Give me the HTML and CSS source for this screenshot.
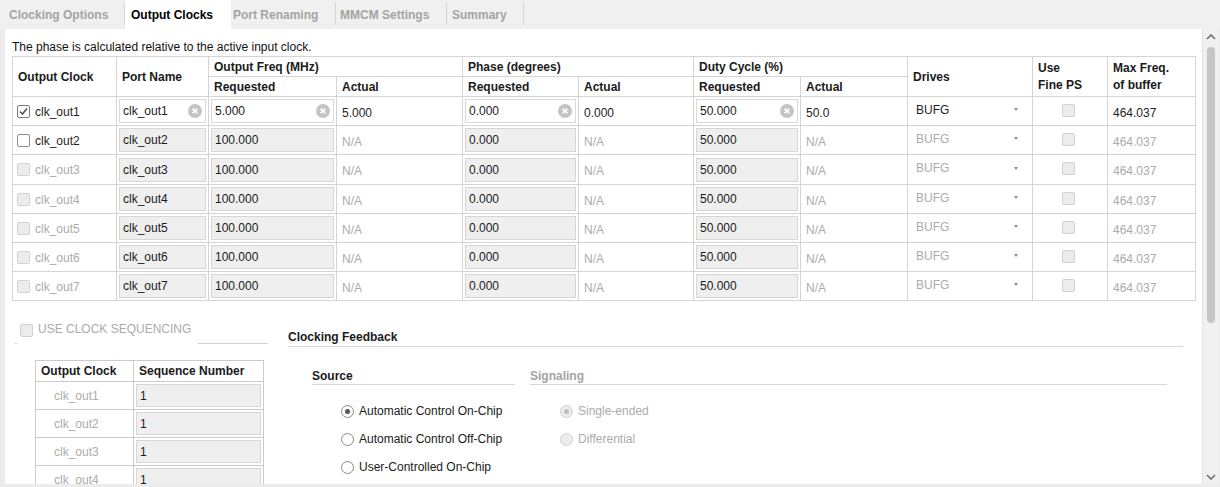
FILE: index.html
```html
<!DOCTYPE html>
<html>
<head>
<meta charset="utf-8">
<link rel="stylesheet" href="styles.css">
</head>
<body>
<div class="tabs">
  <div class="tab t1">Clocking Options</div><span class="sep"></span>
  <div class="tab t2 active">Output Clocks</div>
  <div class="tab t3">Port Renaming</div><span class="sep"></span>
  <div class="tab t4">MMCM Settings</div><span class="sep"></span>
  <div class="tab t5">Summary</div><span class="sep"></span>
</div>
<div class="panel">
  <div class="content">
    <div class="desc">The phase is calculated relative to the active input clock.</div>
    <table class="grid">
      <colgroup>
        <col class="w104"><col class="w92"><col class="w128"><col class="w126"><col class="w116"><col class="w115"><col class="w107"><col class="w107"><col class="w125"><col class="w75"><col class="w88">
      </colgroup>
      <thead>
        <tr class="h1">
          <th rowspan="2">Output Clock</th>
          <th rowspan="2">Port Name</th>
          <th colspan="2">Output Freq (MHz)</th>
          <th colspan="2">Phase (degrees)</th>
          <th colspan="2">Duty Cycle (%)</th>
          <th rowspan="2">Drives</th>
          <th rowspan="2" class="two">Use<br>Fine PS</th>
          <th rowspan="2" class="two">Max Freq.<br>of buffer</th>
        </tr>
        <tr class="h2">
          <th>Requested</th><th>Actual</th>
          <th>Requested</th><th>Actual</th>
          <th>Requested</th><th>Actual</th>
        </tr>
      </thead>
      <tbody>
        <tr>
          <td class="oc"><span class="cb on"><svg width="11" height="11" viewBox="0 0 11 11"><polyline points="2,5.5 4.5,8 9,2.5" fill="none" stroke="#555" stroke-width="1.6"/></svg></span><span>clk_out1</span></td>
          <td class="in"><div class="field white"><span>clk_out1</span><span class="clr"><svg width="14" height="14" viewBox="0 0 14 14"><circle cx="7" cy="7" r="7" fill="#c4c4c4"/><path d="M4.6 4.6 L9.4 9.4 M9.4 4.6 L4.6 9.4" stroke="#fff" stroke-width="1.7"/></svg></span></div></td>
          <td class="in"><div class="field white"><span>5.000</span><span class="clr"><svg width="14" height="14" viewBox="0 0 14 14"><circle cx="7" cy="7" r="7" fill="#c4c4c4"/><path d="M4.6 4.6 L9.4 9.4 M9.4 4.6 L4.6 9.4" stroke="#fff" stroke-width="1.7"/></svg></span></div></td>
          <td class="act">5.000</td>
          <td class="in"><div class="field white"><span>0.000</span><span class="clr"><svg width="14" height="14" viewBox="0 0 14 14"><circle cx="7" cy="7" r="7" fill="#c4c4c4"/><path d="M4.6 4.6 L9.4 9.4 M9.4 4.6 L4.6 9.4" stroke="#fff" stroke-width="1.7"/></svg></span></div></td>
          <td class="act">0.000</td>
          <td class="in"><div class="field white"><span>50.000</span><span class="clr"><svg width="14" height="14" viewBox="0 0 14 14"><circle cx="7" cy="7" r="7" fill="#c4c4c4"/><path d="M4.6 4.6 L9.4 9.4 M9.4 4.6 L4.6 9.4" stroke="#fff" stroke-width="1.7"/></svg></span></div></td>
          <td class="act">50.0</td>
          <td class="drv"><div class="drv-in"><span>BUFG</span><span class="caret"></span></div></td>
          <td class="fps"><span class="cb dis"></span></td>
          <td class="act">464.037</td>
        </tr>
        <tr>
          <td class="oc"><span class="cb"></span><span>clk_out2</span></td>
          <td class="in"><div class="field">clk_out2</div></td>
          <td class="in"><div class="field">100.000</div></td>
          <td class="act na">N/A</td>
          <td class="in"><div class="field">0.000</div></td>
          <td class="act na">N/A</td>
          <td class="in"><div class="field">50.000</div></td>
          <td class="act na">N/A</td>
          <td class="drv na"><div class="drv-in"><span>BUFG</span><span class="caret"></span></div></td>
          <td class="fps"><span class="cb dis"></span></td>
          <td class="act na">464.037</td>
        </tr>
        <tr class="tall">
          <td class="oc na"><span class="cb dis"></span><span>clk_out3</span></td>
          <td class="in"><div class="field">clk_out3</div></td>
          <td class="in"><div class="field">100.000</div></td>
          <td class="act na">N/A</td>
          <td class="in"><div class="field">0.000</div></td>
          <td class="act na">N/A</td>
          <td class="in"><div class="field">50.000</div></td>
          <td class="act na">N/A</td>
          <td class="drv na"><div class="drv-in"><span>BUFG</span><span class="caret"></span></div></td>
          <td class="fps"><span class="cb dis"></span></td>
          <td class="act na">464.037</td>
        </tr>
        <tr>
          <td class="oc na"><span class="cb dis"></span><span>clk_out4</span></td>
          <td class="in"><div class="field">clk_out4</div></td>
          <td class="in"><div class="field">100.000</div></td>
          <td class="act na">N/A</td>
          <td class="in"><div class="field">0.000</div></td>
          <td class="act na">N/A</td>
          <td class="in"><div class="field">50.000</div></td>
          <td class="act na">N/A</td>
          <td class="drv na"><div class="drv-in"><span>BUFG</span><span class="caret"></span></div></td>
          <td class="fps"><span class="cb dis"></span></td>
          <td class="act na">464.037</td>
        </tr>
        <tr>
          <td class="oc na"><span class="cb dis"></span><span>clk_out5</span></td>
          <td class="in"><div class="field">clk_out5</div></td>
          <td class="in"><div class="field">100.000</div></td>
          <td class="act na">N/A</td>
          <td class="in"><div class="field">0.000</div></td>
          <td class="act na">N/A</td>
          <td class="in"><div class="field">50.000</div></td>
          <td class="act na">N/A</td>
          <td class="drv na"><div class="drv-in"><span>BUFG</span><span class="caret"></span></div></td>
          <td class="fps"><span class="cb dis"></span></td>
          <td class="act na">464.037</td>
        </tr>
        <tr>
          <td class="oc na"><span class="cb dis"></span><span>clk_out6</span></td>
          <td class="in"><div class="field">clk_out6</div></td>
          <td class="in"><div class="field">100.000</div></td>
          <td class="act na">N/A</td>
          <td class="in"><div class="field">0.000</div></td>
          <td class="act na">N/A</td>
          <td class="in"><div class="field">50.000</div></td>
          <td class="act na">N/A</td>
          <td class="drv na"><div class="drv-in"><span>BUFG</span><span class="caret"></span></div></td>
          <td class="fps"><span class="cb dis"></span></td>
          <td class="act na">464.037</td>
        </tr>
        <tr>
          <td class="oc na"><span class="cb dis"></span><span>clk_out7</span></td>
          <td class="in"><div class="field">clk_out7</div></td>
          <td class="in"><div class="field">100.000</div></td>
          <td class="act na">N/A</td>
          <td class="in"><div class="field">0.000</div></td>
          <td class="act na">N/A</td>
          <td class="in"><div class="field">50.000</div></td>
          <td class="act na">N/A</td>
          <td class="drv na"><div class="drv-in"><span>BUFG</span><span class="caret"></span></div></td>
          <td class="fps"><span class="cb dis"></span></td>
          <td class="act na">464.037</td>
        </tr>
      </tbody>
    </table>

    <div class="lower">
      <div class="seq">
        <div class="seq-head">
          <span class="tick"></span>
          <span class="cb dis"></span>
          <span class="seq-title">USE CLOCK SEQUENCING</span>
          <span class="seq-line"></span>
        </div>
        <table class="seqt">
          <colgroup><col class="w98"><col class="w130"></colgroup>
          <thead><tr><th>Output Clock</th><th>Sequence Number</th></tr></thead>
          <tbody>
            <tr><td class="sname">clk_out1</td><td class="in"><div class="field">1</div></td></tr>
            <tr><td class="sname">clk_out2</td><td class="in"><div class="field">1</div></td></tr>
            <tr><td class="sname">clk_out3</td><td class="in"><div class="field">1</div></td></tr>
            <tr><td class="sname">clk_out4</td><td class="in"><div class="field">1</div></td></tr>
            <tr><td class="sname">clk_out5</td><td class="in"><div class="field">1</div></td></tr>
          </tbody>
        </table>
      </div>
      <div class="fb">
        <div class="fb-title">Clocking Feedback</div>
        <div class="fb-body">
          <div class="grp src">
            <div class="grp-title">Source</div>
            <div class="radios">
              <div class="radio"><span class="rb sel"></span><span>Automatic Control On-Chip</span></div>
              <div class="radio"><span class="rb"></span><span>Automatic Control Off-Chip</span></div>
              <div class="radio"><span class="rb"></span><span>User-Controlled On-Chip</span></div>
            </div>
          </div>
          <div class="grp sig">
            <div class="grp-title dim">Signaling</div>
            <div class="radios">
              <div class="radio dim"><span class="rb sel dis"></span><span>Single-ended</span></div>
              <div class="radio dim"><span class="rb dis"></span><span>Differential</span></div>
            </div>
          </div>
        </div>
      </div>
    </div>
  </div>
  <div class="scrollbar">
    <svg class="chev-up" width="10" height="6" viewBox="0 0 10 6"><polyline points="1,5 5,1 9,5" fill="none" stroke="#6e6e6e" stroke-width="1.6"/></svg>
    <div class="thumb"></div>
    <svg class="chev-down" width="10" height="6" viewBox="0 0 10 6"><polyline points="1,1 5,5 9,1" fill="none" stroke="#6e6e6e" stroke-width="1.6"/></svg>
  </div>
</div>
</body>
</html>
```
FILE: styles.css
```css
* { box-sizing: border-box; }
html, body { margin: 0; padding: 0; }
body {
  width: 1220px;
  height: 487px;
  overflow: hidden;
  background: #ececec;
  font-family: "Liberation Sans", Arial, sans-serif;
  font-size: 12px;
  color: #1e1e1e;
}

/* tabs */
.tabs { display: flex; height: 29px; background: #f0f0f0; }
.tab {
  display: flex;
  align-items: center;
  font-weight: bold;
  color: #a4a4a4;
  padding-left: 5px;
  padding-top: 1px;
}
.tab.t1 { width: 124px; padding-left: 9px; }
.tab.t2 { width: 106px; padding-left: 6px; }
.tab.t3 { width: 104px; padding-left: 2px; }
.tab.t4 { width: 110px; padding-left: 4px; }
.tab.t5 { width: 76px; padding-left: 5px; }
.tab.active { background: #fff; color: #000; }
.sep { width: 1px; height: 22px; margin-top: 3px; background: #d4d4d4; }

/* panel */
.panel { display: flex; margin-left: 5px; width: 1214px; height: 455px; background: #fff; }
.content { flex: 1; background: #fff; padding: 11px 0 0 7px; overflow: hidden; }
.scrollbar {
  width: 17px;
  background: #f0f0f0;
  border-left: 1px solid #e4e4e4;
  display: flex;
  flex-direction: column;
  align-items: center;
  padding: 5px 0 4px;
}
.chev-up { display: block; }
.thumb { width: 8px; height: 276px; margin-top: 7px; border-radius: 4px; background: #c5c5c5; }
.chev-down { display: block; margin-top: auto; }

.desc { line-height: 14px; margin-bottom: 2px; color: #111; }

/* main grid */
.grid { border-collapse: collapse; table-layout: fixed; width: 1183px; }
.grid th, .grid td { border: 1px solid #d4d4d4; padding: 0; }
.w104 { width: 104px; } .w92 { width: 92px; } .w128 { width: 128px; } .w126 { width: 126px; }
.w116 { width: 116px; } .w115 { width: 115px; } .w107 { width: 107px; } .w125 { width: 125px; }
.w75 { width: 75px; } .w88 { width: 88px; } .w98 { width: 98px; } .w130 { width: 130px; }

.grid th { text-align: left; font-weight: bold; padding: 0 5px; color: #1a1a1a; vertical-align: middle; }
.grid tr.h1 { height: 20px; }
.grid tr.h2 { height: 20px; }
.grid th.two { line-height: 17px; vertical-align: top; padding-top: 3px; }
.grid tbody tr { height: 29px; }
.grid tbody tr.tall { height: 30px; }
.grid td { vertical-align: middle; }

.oc { padding-left: 4px !important; white-space: nowrap; }
.oc .cb { vertical-align: middle; margin-right: 5px; }
.oc span { vertical-align: middle; }

.in { padding: 2px !important; }
.field {
  display: flex;
  align-items: center;
  justify-content: space-between;
  height: 24px;
  border: 1px solid #d6d6d6;
  background: #efefef;
  padding: 0 3px 0 3px;
  color: #1a1a1a;
}
.field.white { background: #fff; border-color: #dadada; }
.clr { display: flex; }
.clr svg { display: block; }

.act { padding: 3px 5px 0 !important; }
.na { color: #ababab; }

.drv { padding: 0 14px 0 8px !important; }
.drv-in { display: flex; justify-content: space-between; align-items: center; padding-bottom: 3px; }
.drv.na .drv-in { color: #ababab; }
.caret {
  width: 0; height: 0;
  border-left: 2.5px solid transparent;
  border-right: 2.5px solid transparent;
  border-top: 3px solid #8a8a8a;
}

.fps { text-align: center; }
.fps .cb { vertical-align: middle; margin-bottom: 2px; margin-right: 4px; }

/* checkbox */
.cb {
  display: inline-block;
  width: 13px;
  height: 13px;
  border: 1px solid #8e8e8e;
  border-radius: 2px;
  background: #fff;
}
.cb svg { display: block; margin: 0; }
.cb.on { border-color: #7c7c7c; }
.cb.dis { border-color: #d2d2d2; background: #ececec; }

/* lower section */
.lower { display: flex; align-items: flex-start; }
.seq { width: 256px; margin-top: 21px; }
.seq-head { display: flex; align-items: flex-start; height: 22px; }
.tick { width: 2px; height: 1px; align-self: flex-end; background: #cfcfcf; margin-left: 3px; }
.seq-head .cb { margin-left: 3px; margin-top: 2px; }
.seq-title { margin-left: 5px; line-height: 14px; color: #ababab; }
.seq-line { flex: 1; align-self: flex-end; margin-left: 7px; height: 1px; background: #cfcfcf; }

.seqt { border-collapse: collapse; table-layout: fixed; width: 228px; margin: 16px 0 0 23px; }
.seqt th, .seqt td { border: 1px solid #cbcbcb; padding: 0; }
.seqt th { height: 21px; text-align: left; font-weight: bold; padding: 0 5px; color: #1a1a1a; }
.seqt tbody tr { height: 28px; }
.seqt .sname { padding-left: 18px; color: #ababab; }
.seqt .field { height: 23px; }

.fb { flex: 1; margin-left: 20px; margin-right: 19px; margin-top: 29px; }
.fb-title {
  font-weight: bold;
  line-height: 14px;
  padding-bottom: 2px;
  border-bottom: 1px solid #d6d6d6;
  color: #1a1a1a;
}
.fb-body { display: flex; padding: 0 16px 0 24px; margin-top: 22px; }
.grp.src { width: 203px; }
.grp.sig { flex: 1; margin-left: 15px; }
.grp-title {
  font-weight: bold;
  line-height: 14px;
  padding-bottom: 1px;
  border-bottom: 1px solid #d6d6d6;
  color: #1a1a1a;
}
.grp-title.dim { color: #a4a4a4; }
.radios { margin-top: 12px; }
.src .radios { padding-left: 29px; }
.sig .radios { padding-left: 30px; }
.radio { display: flex; align-items: center; height: 28px; white-space: nowrap; color: #1a1a1a; }
.radio.dim { color: #ababab; }
.rb {
  width: 13px;
  height: 13px;
  border-radius: 50%;
  border: 1px solid #8a8a8a;
  background: #fff;
  margin-right: 5px;
  display: flex;
  align-items: center;
  justify-content: center;
  flex: none;
}
.rb.sel::after { content: ""; width: 5px; height: 5px; border-radius: 50%; background: #555; }
.rb.dis { border-color: #d0d0d0; background: #ededed; }
.rb.sel.dis::after { background: #c0c0c0; }
```
